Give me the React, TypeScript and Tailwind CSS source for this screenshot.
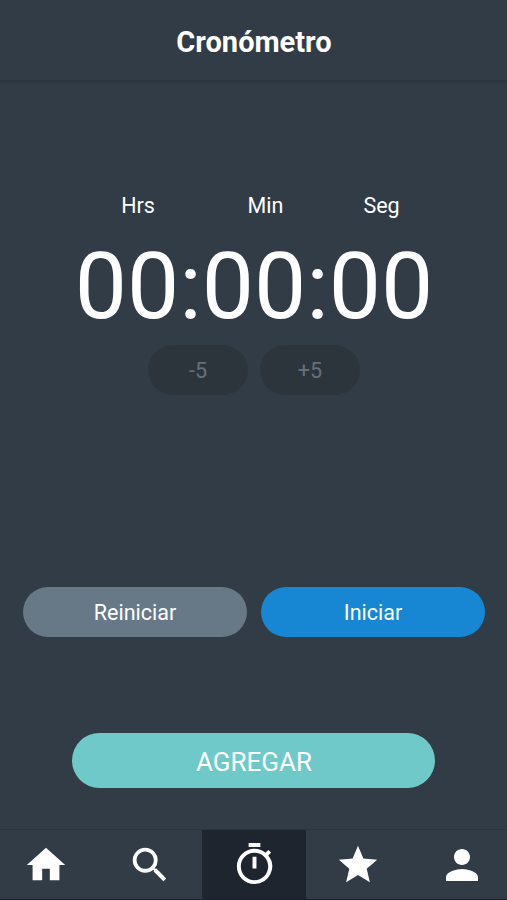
import type { ReactNode } from 'react';
import { MdHome, MdOutlineTimer, MdPerson, MdSearch, MdStar } from 'react-icons/md';

interface Tab {
  id: string;
  icon: ReactNode;
}

const tabs: Tab[] = [
  { id: 'home', icon: <MdHome size={46} /> },
  { id: 'search', icon: <MdSearch size={46} /> },
  { id: 'timer', icon: <MdOutlineTimer size={47} /> },
  { id: 'favorites', icon: <MdStar size={46} /> },
  { id: 'profile', icon: <MdPerson size={48} /> },
];

export default function App() {
  const activeTab = 'timer';

  return (
    <div className="flex h-[900px] w-full flex-col overflow-hidden bg-[#323c46] font-['Roboto',sans-serif] text-white">
      {/* Header */}
      <header className="flex h-20 items-center justify-center pt-1">
        <h1 className="pl-px text-[29px] font-bold leading-none">Cronómetro</h1>
      </header>
      <div className="h-1 bg-gradient-to-b from-[#2c353e] to-[#303a43]" />

      <main className="flex flex-1 flex-col items-center">
        {/* Clock */}
        <div className="mt-[109px] flex w-[360px] text-[21.5px] leading-[26px]">
          <span className="w-[129px] shrink-0 text-center">Hrs</span>
          <span className="w-[126px] shrink-0 text-center">Min</span>
          <span className="w-[106px] shrink-0 text-center">Seg</span>
        </div>
        <div className="mt-[18px] pl-px text-[93px] leading-[100px]">00:00:00</div>

        <div className="mt-2 flex gap-3 text-[21.5px] text-[#65717a]">
          <button className="h-[50px] w-[100px] rounded-full bg-[#2c353c] pl-px pt-0.5">-5</button>
          <button className="h-[50px] w-[100px] rounded-full bg-[#2c353c] pl-px pt-0.5">+5</button>
        </div>

        {/* Controls */}
        <div className="mt-[191.5px] grid w-full grid-cols-2 gap-[14px] pl-[23px] pr-[22px] text-[21.5px]">
          <button className="h-[50px] rounded-full bg-[#677987] pt-[3px]">Reiniciar</button>
          <button className="h-[50px] rounded-full bg-[#1787d4] pt-[3px]">Iniciar</button>
        </div>

        <button className="mt-24 h-[55px] w-[363px] rounded-full bg-[#6fc9c8] pl-px pt-1 text-[26px]">
          AGREGAR
        </button>
      </main>

      {/* Bottom navigation, slightly wider than the screen */}
      <nav className="-ml-1.5 -mr-[7px] grid h-[71px] shrink-0 grid-cols-5 border-b border-t border-b-[#1b212a] border-t-[#2b343d]">
        {tabs.map((tab) => (
          <button
            key={tab.id}
            className={`flex items-center justify-center ${tab.id === activeTab ? 'bg-[#1e252f]' : ''}`}
          >
            {tab.icon}
          </button>
        ))}
      </nav>
    </div>
  );
}
